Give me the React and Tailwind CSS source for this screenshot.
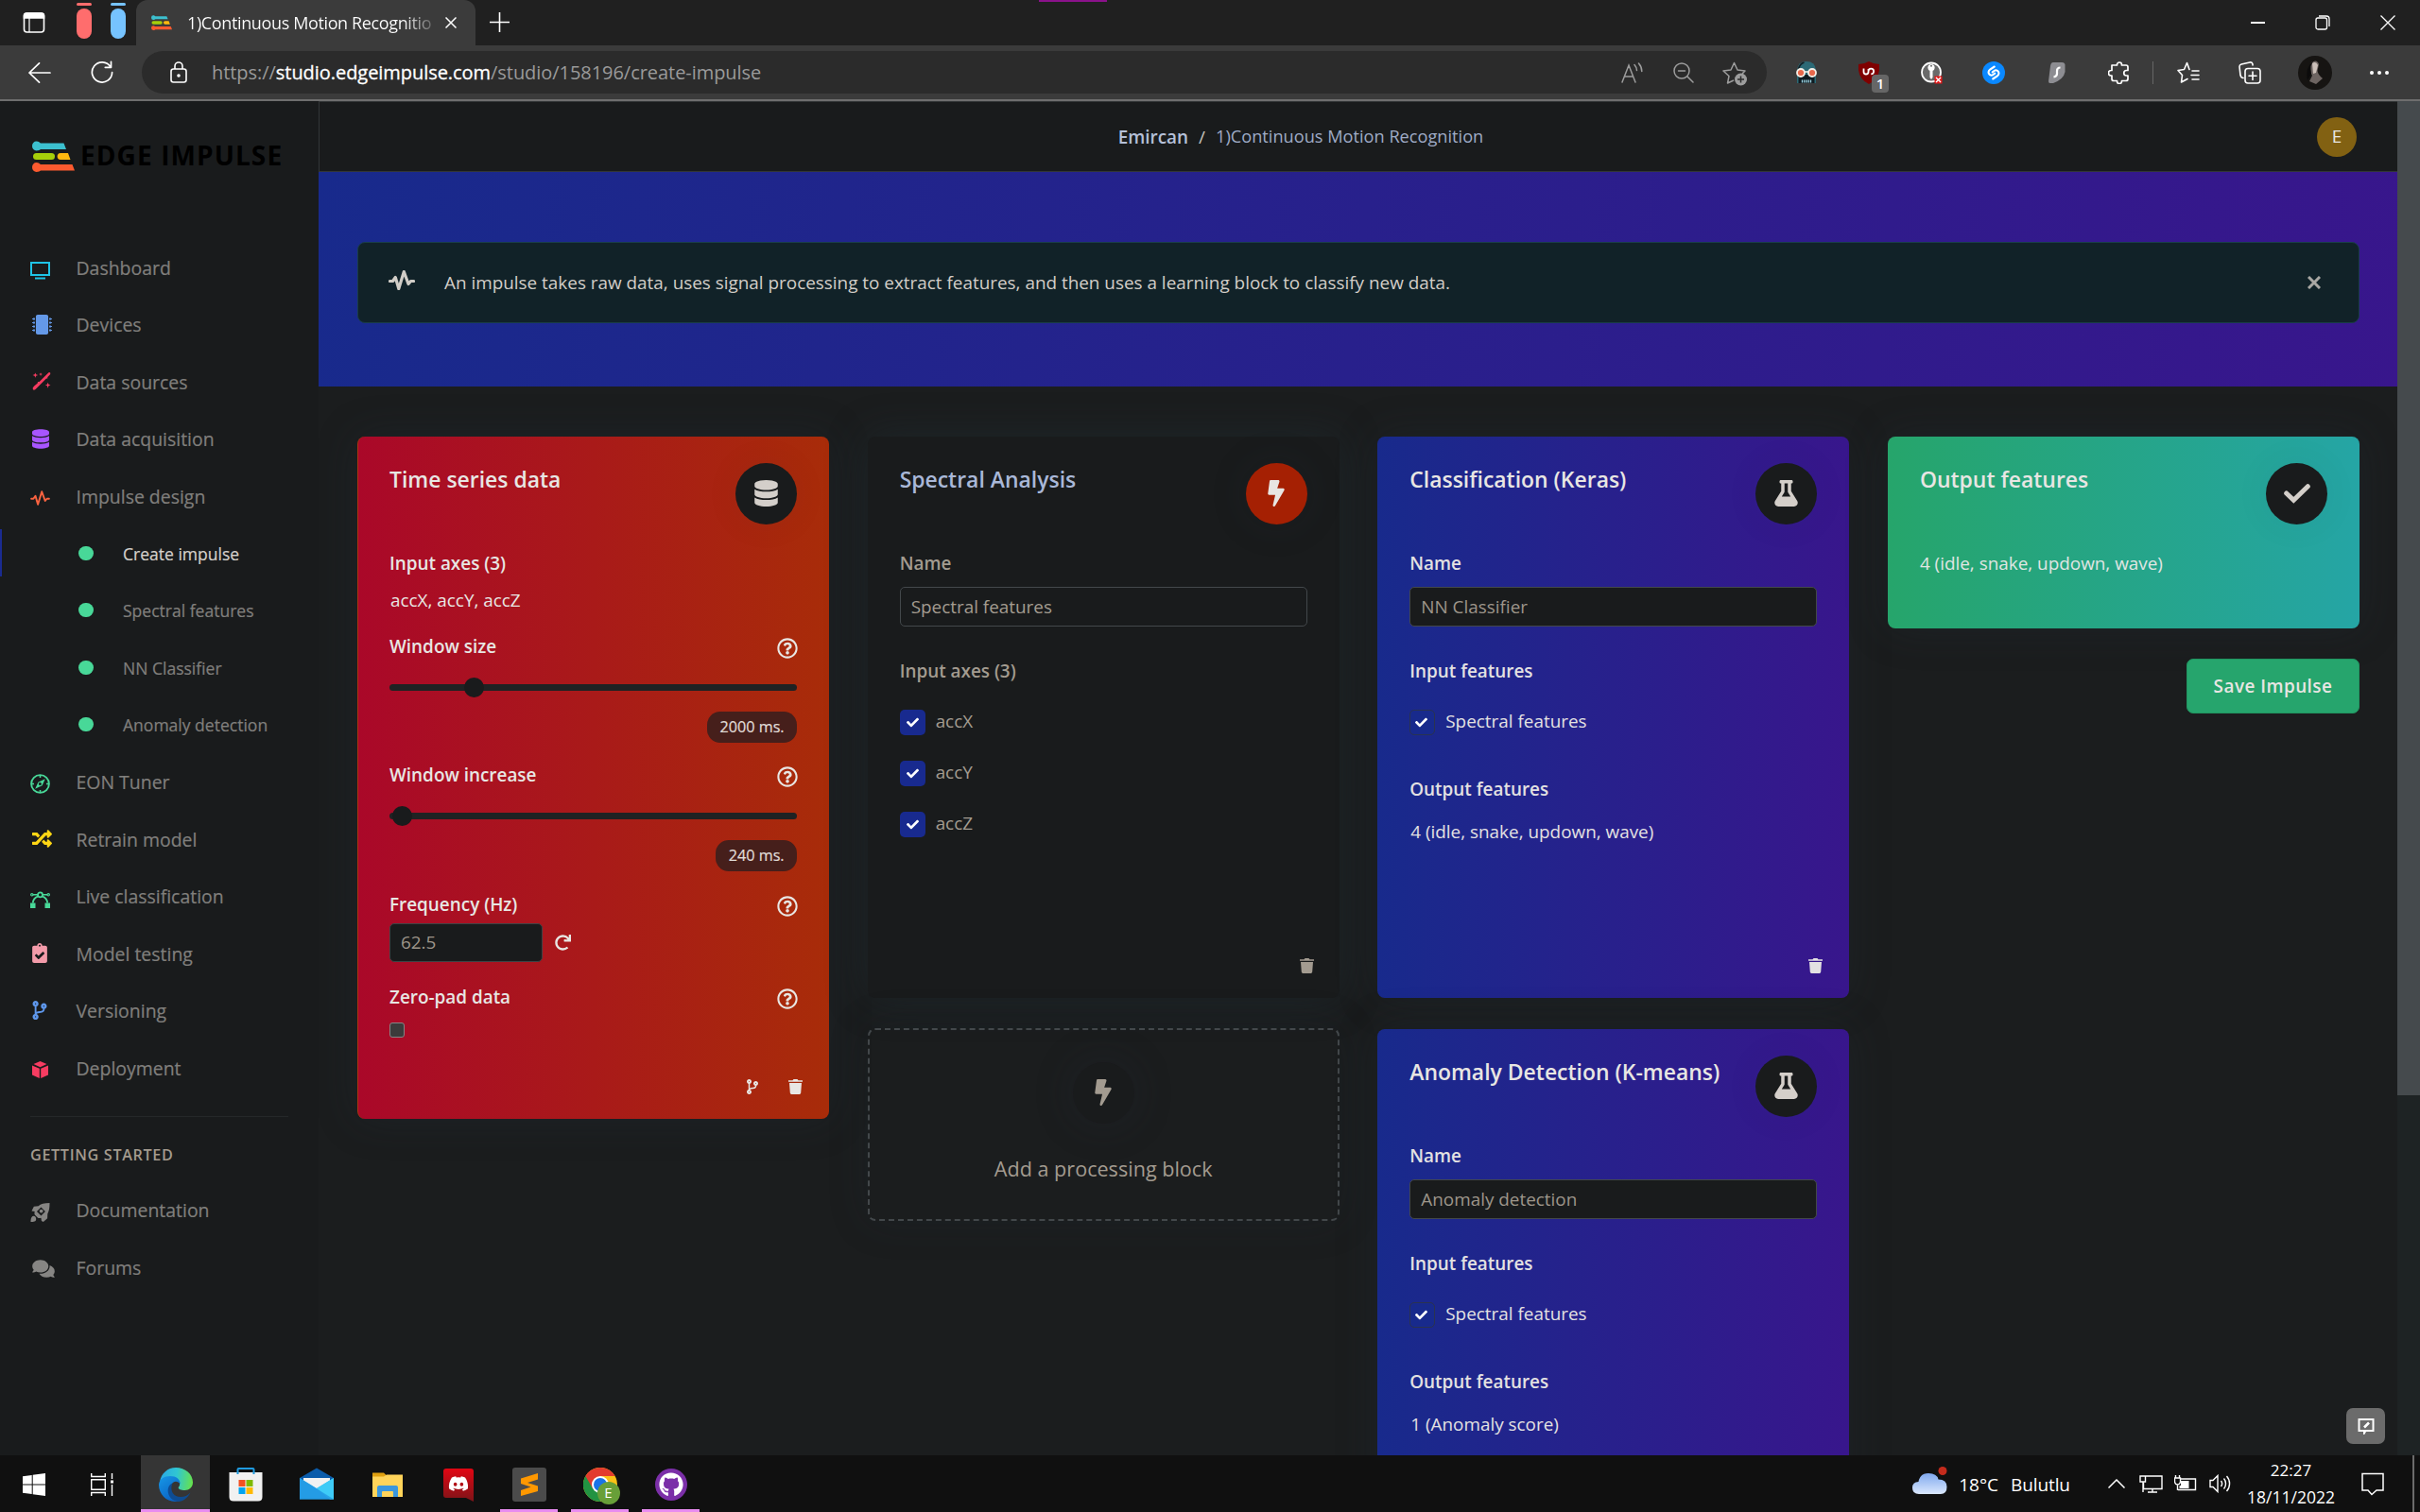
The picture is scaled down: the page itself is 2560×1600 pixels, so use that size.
import React from "react";
import {
  FaDatabase, FaMicrochip, FaRandom, FaClipboardCheck, FaCodeBranch, FaComments,
  FaBolt, FaFlask, FaRegQuestionCircle, FaRedo, FaGithub, FaCheck,
} from "react-icons/fa";
import { FaDiscord } from "react-icons/fa6";

/* ---------- shared icons ---------- */

function EdgeImpulseMark({ className }) {
  return (
    <svg viewBox="0 0 45 33" className={className} preserveAspectRatio="none">
      <path d="M4.5 .5C7 .5 8 2 9 2.5H33.5L36 9H9C8 9.5 7 10.500 4.500 10.500A4.500 5 0 0 1 4.500 .500Z" fill="#3cc0cf" />
      <rect x="1" y="13" width="23" height="7" rx="3.500" fill="#a6cf0a" />
      <path d="M30 13H38L40.500 20H30C25.500 20 25.500 13 30 13Z" fill="#ffb90f" />
      <path d="M4.500 23C7 23 8 24.500 9 25H42.500L45 31.500H9C8 32 7 33 4.500 33A4.500 5 0 0 1 4.500 23Z" fill="#fb5a2f" />
    </svg>
  );
}

function Pulse({ className, width = 2.4 }) {
  return (
    <svg viewBox="0 0 28 21" className={className} fill="none" stroke="currentColor" strokeWidth={width} strokeLinejoin="round" strokeLinecap="round">
      <path d="M1.500 11.500H4.500L7.300 7.500L10.800 19.500L16.300 1.500L21 14.500L23.500 11.500H26.500" />
    </svg>
  );
}

function Monitor({ className }) {
  return (
    <svg viewBox="0 0 21 19" className={className} fill="none" stroke="currentColor">
      <path d="M1 1H20V14H1Z" strokeWidth="2" />
      <path d="M5 17.500H16" strokeWidth="2" />
    </svg>
  );
}

function Wand({ className }) {
  return (
    <svg viewBox="0 0 21 21" className={className} fill="currentColor">
      <path d="M18.300 .700Q20.800 .200 20.200 2.500L17 6L17.300 7L15.500 7.600L4.800 18.500Q2.500 21 .900 19.700Q0 18 2 16L6 12.500L6.300 11L8 11Z" />
      <path d="M3.500 1L4.300 3L6.500 3.700L4.300 4.500L3.500 6.600L2.700 4.500L.500 3.700L2.700 3ZM9.500 .900L10 2.200L11.500 2.700L10 3.200L9.500 4.600L9 3.200L7.500 2.700L9 2.200ZM17.500 11.700L18.300 14L20.500 14.800L18.300 15.500L17.500 18L16.700 15.500L14.500 14.800L16.700 14Z" />
    </svg>
  );
}

function Compass({ className }) {
  return (
    <svg viewBox="0 0 21 21" className={className} fill="none" stroke="currentColor">
      <circle cx="10.500" cy="10.500" r="9.400" strokeWidth="1.900" />
      <path d="M10.500 1.500V4M10.500 17V19.500M1.500 10.500H4M17 10.500H19.500" strokeWidth="1.600" />
      <path d="M15.800 5.200L12.600 12.200L5.200 15.800L8.400 8.700Z" fill="currentColor" stroke="none" />
      <circle cx="10.400" cy="10.600" r="1.500" fill="#191b1c" stroke="none" />
    </svg>
  );
}

function Vector({ className }) {
  return (
    <svg viewBox="0 0 21 18" className={className} fill="none" stroke="currentColor">
      <path d="M3 3.800H8M13 3.800H18" strokeWidth="1.400" />
      <circle cx="10.500" cy="3.800" r="2.500" strokeWidth="1.800" />
      <circle cx="1.800" cy="3.800" r="1.200" strokeWidth="1.200" />
      <circle cx="19.200" cy="3.800" r="1.200" strokeWidth="1.200" />
      <path d="M8.500 5.300C5 6.500 3 9 2.800 12.500M12.500 5.300C16 6.500 18 9 18.200 12.500" strokeWidth="1.800" />
      <path d="M0 12.500H5.500V18H0ZM15.500 12.500H21V18H15.500Z" fill="currentColor" stroke="none" />
    </svg>
  );
}

function Box({ className }) {
  return (
    <svg viewBox="0 0 17 18" className={className} fill="currentColor">
      <path d="M8.500 0L15.500 3L8.500 6.200L1.500 3ZM0 4.500L7.800 7.800V18L0 14.500ZM17 4.500L9.200 7.800V18L17 14.500Z" />
    </svg>
  );
}

function Spaceship({ className }) {
  return (
    <svg viewBox="0 0 21 21" className={className} fill="currentColor">
      <path fillRule="evenodd" d="M21 0C15 0 11 1 8.500 3.500L3.500 4L1 9L4.500 9.500C4 11 4 12 4.500 13L8 16.500C9 17 10 17 11.500 16.500L12 20L14 21L18.500 17L18.700 12C20.500 9 21 5 21 0ZM11.500 4.800L16.200 9.500L11.500 14.200L6.800 9.500Z" />
      <circle cx="11.700" cy="9" r="2" />
      <path d="M3 14.500C0.500 15 0 18 0 21C3 21 6 20.500 6 18C6 16 5 14.500 3 14.500Z" />
    </svg>
  );
}

function Trash({ className }) {
  return (
    <svg viewBox="0 0 15 16" className={className} fill="currentColor">
      <path d="M0 1.200H4.500L5.500 0H9.500L10.500 1.200H15V2.700H0ZM1 4H14L13.200 14.600Q13 16 11.800 16H3.200Q2 16 1.800 14.600Z" />
    </svg>
  );
}

function BigCheck({ className }) {
  return (
    <svg viewBox="0 0 28 21" className={className} fill="none" stroke="currentColor" strokeWidth="5" strokeLinecap="round">
      <path d="M2.700 10L10.300 17.200L25.300 2.700" />
    </svg>
  );
}

/* ---------- browser chrome ---------- */

function TabBar() {
  return (
    <div className="flex h-12 shrink-0 bg-[#202020] text-white">
      <svg className="ml-[24px] mt-[12px] h-6 w-6" viewBox="0 0 24 24" fill="none" stroke="white" strokeWidth="1.600">
        <rect x="1.500" y="2" width="21" height="20" rx="3" />
        <path d="M1.500 4.500Q1.500 2 4.500 2H19.500Q22.500 2 22.500 4.500V7H1.500Z" fill="white" />
        <path d="M7 7V22" strokeWidth="1.200" />
      </svg>
      <div className="ml-[33px] flex w-4 flex-col pt-[3px]">
        <div className="h-[3px] rounded-sm bg-[#ff6d6d]" />
        <div className="mt-[3px] h-8 rounded-full bg-[#ff6d6d]" />
      </div>
      <div className="ml-[20px] flex w-4 flex-col pt-[3px]">
        <div className="h-[3px] rounded-sm bg-[#76c3ff]" />
        <div className="mt-[3px] h-8 rounded-full bg-[#76c3ff]" />
      </div>
      <div className="ml-[11px] flex w-[359px] items-center rounded-t-xl bg-[#3b3b3b] pl-[16px]">
        <EdgeImpulseMark className="h-4 w-[22px]" />
        <div className="ml-[16px] w-[259px] overflow-hidden whitespace-nowrap bg-gradient-to-r from-white from-88% to-[#666] bg-clip-text text-[18px] tracking-[-0.37px] text-transparent">
          1)Continuous Motion Recognitio
        </div>
        <svg className="ml-[14px] h-3 w-3" viewBox="0 0 12 12" stroke="white" strokeWidth="1.500"><path d="M.5 .5L11.500 11.500M11.500 .5L.5 11.500" /></svg>
      </div>
      <svg className="ml-[15px] mt-[13px] h-[21px] w-[21px]" viewBox="0 0 21 21" stroke="white" strokeWidth="1.600"><path d="M10.500 0V21M0 10.500H21" /></svg>
      <div className="flex h-12 grow items-center justify-end pr-[26px]">
        <div className="h-[1.500px] w-[15px] bg-white" />
        <svg className="ml-[53px] h-4 w-4" viewBox="0 0 16 16" fill="none" stroke="white" strokeWidth="1.300"><rect x="1" y="3" width="11.500" height="12" rx="2" /><path d="M4 1H12Q15 1 15 4V12" /></svg>
        <svg className="ml-[53px] h-4 w-4" viewBox="0 0 16 16" stroke="white" strokeWidth="1.300"><path d="M.5 .5L15.500 15.500M15.500 .5L.5 15.500" /></svg>
      </div>
      <div className="absolute left-[1099px] top-0 h-[2px] w-[72px] bg-[#8b128b]" />
    </div>
  );
}

function Toolbar() {
  return (
    <div className="flex h-[57px] shrink-0 items-center bg-[#3b3b3b] text-white">
      <svg className="ml-[30px] h-6 w-6" viewBox="0 0 24 24" fill="none" stroke="white" strokeWidth="1.700" strokeLinecap="round" strokeLinejoin="round"><path d="M23 12H1M11.500 1.800L1 12L11.500 22.200" /></svg>
      <svg className="ml-[42px] h-[25px] w-[24px]" viewBox="0 0 24 25" fill="none" stroke="white" strokeWidth="1.700" strokeLinecap="round" strokeLinejoin="round"><path d="M21 6.800A10.600 10.600 0 1 0 22.600 12.500M21.500 1.300V7.300H15.300" /></svg>
      <div className="ml-[30px] flex h-[45px] w-[1719px] items-center rounded-full bg-[#2b2b2b] pl-[30px]">
        <svg className="h-[23px] w-[18px]" viewBox="0 0 18 23" fill="none" stroke="white" strokeWidth="1.600"><rect x="1" y="8" width="16" height="14" rx="2.500" /><path d="M5 8V5A4 4 0 0 1 13 5V8" /><circle cx="9" cy="15" r="1" fill="white" /></svg>
        <div className="ml-[26px] grow whitespace-nowrap text-[20px] tracking-[-0.05px] text-[#9a9a9a]">
          https://<span className="text-white [-webkit-text-stroke:0.3px_white]">studio.edgeimpulse.com</span>/studio/158196/create-impulse
        </div>
        <svg className="h-[22px] w-[24px]" viewBox="0 0 24 22" fill="none" stroke="#9d9d9d" strokeWidth="1.500" strokeLinecap="round"><path d="M1 21L8 3L15 21M3.500 15H12.500M14 2.500A10 10 0 0 1 16.500 8.500M18.500 1A13 13 0 0 1 21.800 9.500" /></svg>
        <svg className="ml-[31px] h-[22px] w-[22px]" viewBox="0 0 22 22" fill="none" stroke="#9d9d9d" strokeWidth="1.500" strokeLinecap="round"><circle cx="9" cy="9" r="8" /><path d="M15 15L21 21M5.500 9H12.500" /></svg>
        <svg className="ml-[30px] mr-[21px] mt-[2px] h-[26px] w-[26px]" viewBox="0 0 26 26" fill="none" stroke="#9d9d9d" strokeWidth="1.500" strokeLinejoin="round"><path d="M12 20L5.500 23L7 15.500L1 10L9 9L12.500 1.500L16 9L24 10L21 13" /><circle cx="19.500" cy="19" r="6.500" fill="#9d9d9d" stroke="none" /><path d="M19.500 15.500V22.500M16 19H23" stroke="#2b2b2b" /></svg>
      </div>
      <svg className="ml-[30px] h-[23px] w-[24px]" viewBox="0 0 24 23">
        <path d="M2 9Q3 0 12 0T22 9V23H2Z" fill="#2c6a76" />
        <path d="M3.500 8Q5 2.500 9.500 1" stroke="#142026" strokeWidth="1.800" fill="none" />
        <path d="M3.500 14H20.500V23H3.500Z" fill="#101c22" />
        <circle cx="6" cy="12" r="4" fill="#e8694c" stroke="#f5eee6" strokeWidth="1.800" /><circle cx="18" cy="12" r="4" fill="#e8694c" stroke="#f5eee6" strokeWidth="1.800" />
        <path d="M9.500 11H14.500" stroke="#f5eee6" strokeWidth="1.600" />
        <path d="M7.500 19.500V22.500M9.800 19.500V22.500M12 19.500V22.500M14.200 19.500V22.500M16.500 19.500V22.500" stroke="#9fd6e4" strokeWidth="1.300" />
      </svg>
      <div className="relative ml-[43px] h-[24px] w-[22px]">
        <svg className="h-6 w-[22px]" viewBox="0 0 22 24"><path d="M11 0Q16 3 22 3V9Q21 19 11 24Q1 19 0 9V3Q6 3 11 0Z" fill="#800000" /><path d="M5.500 7.500V11Q5.500 13.500 8 13.500T10.500 11V8M10.500 10.500A2.800 2.800 0 1 1 13.300 13.300" fill="none" stroke="white" strokeWidth="1.800" /></svg>
        <div className="absolute left-[14px] top-[14px] flex h-[19px] w-[18px] items-center justify-center rounded bg-[#666] text-[15px] font-semibold leading-none">1</div>
      </div>
      <svg className="ml-[44px] h-[24px] w-[23px]" viewBox="0 0 23 24"><circle cx="11" cy="11.500" r="10" fill="#6a6a6a" stroke="white" strokeWidth="1.800" /><circle cx="11" cy="6.500" r="3.600" fill="white" /><circle cx="11" cy="4.800" r="1" fill="#6a6a6a" /><path d="M9.500 9H12.500V17L11 19L9.500 17Z" fill="white" /><rect x="14.500" y="15.500" width="8" height="8" fill="#e01b1b" /><path d="M16 17L21 22M21 17L16 22" stroke="white" strokeWidth="1.400" /></svg>
      <svg className="ml-[42px] h-6 w-6" viewBox="0 0 24 24" fill="none"><circle cx="12" cy="12" r="12" fill="#0a88ff" /><path d="M12.800 5.500L8.500 8.300Q4.800 11.300 8 14.200Q9.800 15.300 11.500 14L13.300 12.600M11.200 18.500L15.500 15.700Q19.200 12.700 16 9.800Q14.200 8.700 12.500 10L10.700 11.400" stroke="white" strokeWidth="2.100" strokeLinecap="round" /></svg>
      <svg className="ml-[46px] h-[22px] w-[18px]" viewBox="0 0 18 22" fill="none"><path d="M5 0H14Q18 0 17.500 4V10Q16 18 5 22H1.500Q0 22 0 20L2 4Q2.500 0 5 0Z" fill="#8d8d92" /><path d="M12.500 5.500Q9 5.500 9 9V12Q9 15 5.500 15.500" stroke="white" strokeWidth="2.200" /></svg>
      <svg className="ml-[45px] h-[24px] w-[22px]" viewBox="0 0 22 24" fill="none" stroke="white" strokeWidth="1.700" strokeLinejoin="round"><path d="M4 4H9.500V3.500A2.500 2.500 0 0 1 14.500 3.500V4H19Q21 4 21 6V9.500H19.500A2.600 2.600 0 0 0 19.500 15H21V18.500Q21 20.500 19 20.500H14.500V21A2.500 2.500 0 0 1 9.500 21V20.500H6Q4 20.500 4 18.500V15H3.200A2.600 2.600 0 0 1 3.200 9.500H4Z" /></svg>
      <div className="ml-[25px] h-6 w-px bg-[#666]" />
      <svg className="ml-[25px] h-6 w-6" viewBox="0 0 24 24" fill="none" stroke="white" strokeWidth="1.600" strokeLinejoin="round" strokeLinecap="round"><path d="M13 8.500L10.500 1.500L7.500 8.500L1 9.500L5.500 14.500L4.500 22L11 18.500M16 10H23M15 14.500H23M16 19H23" /></svg>
      <svg className="ml-[41px] h-6 w-6" viewBox="0 0 24 24" fill="none" stroke="white" strokeWidth="1.600" strokeLinecap="round"><path d="M5 17.500L3.500 17Q2.500 16.500 2 14.500L1 5.500Q1 3.500 3 3L12 1Q14.500 .5 15 3V4" /><rect x="7" y="7.500" width="16" height="15.500" rx="3" /><path d="M15 11V19.500M11 15.200H19" /></svg>
      <svg className="ml-[39px] h-9 w-9" viewBox="0 0 36 36"><circle cx="18" cy="18" r="18" fill="#161412" /><path d="M14 7Q20 3 22 9L20.500 16Q21 20 26 24L19 30L12 27L15 21Q11 14 14 7Z" fill="#6d6461" /><path d="M15 8Q19 5 21 10L19 18L16 19Z" fill="#cbbfb8" /><path d="M17 5Q12 9 14 19L10 26Q7 12 17 5Z" fill="#0c0b0b" /></svg>
      <div className="ml-[40px] flex gap-[4px]"><div className="h-[4px] w-[4px] rounded-full bg-white" /><div className="h-[4px] w-[4px] rounded-full bg-white" /><div className="h-[4px] w-[4px] rounded-full bg-white" /></div>
    </div>
  );
}

/* ---------- sidebar ---------- */

function NavItem({ icon, label }) {
  return (
    <div className="flex h-[60.500px] shrink-0 items-center pl-[32px] text-[19.44px] text-[#807f7c] [-webkit-text-stroke:0.2px]">
      <div className="flex w-[48.500px] items-center">{icon}</div>
      <span className="pt-[1.500px]">{label}</span>
    </div>
  );
}

function SubItem({ label, active }) {
  return (
    <div className="flex h-[60.500px] shrink-0 items-center">
      <div className={active ? "h-[50px] w-[2px] bg-[#1a2b90]" : "w-[2px]"} />
      <div className="ml-[81px] h-[15px] w-[15.500px] rounded-full bg-[#48d898]" />
      <div className={active ? "ml-[31.500px] pt-px text-[17.55px] text-[#d4d0cb] [-webkit-text-stroke:0.2px]" : "ml-[31.500px] pt-px text-[17.55px] text-[#807f7c] [-webkit-text-stroke:0.2px]"}>{label}</div>
    </div>
  );
}

function Sidebar() {
  return (
    <div className="flex w-[337px] shrink-0 flex-col overflow-hidden bg-[#191b1c]">
      <div className="flex h-[145.500px] shrink-0 pl-[34px] pt-[42px]">
        <EdgeImpulseMark className="h-[33px] w-[45px]" />
        <div className="ml-[6px] mt-[-4px] whitespace-nowrap text-[28px] font-bold leading-[38px] tracking-[1.1px] text-black">EDGE IMPULSE</div>
      </div>
      <NavItem label="Dashboard" icon={<Monitor className="mt-[7px] h-[19px] w-[21px] text-[#1fc3e6]" />} />
      <NavItem label="Devices" icon={<FaMicrochip className="ml-[2px] h-[21px] w-[21px] text-[#6499e8]" />} />
      <NavItem label="Data sources" icon={<Wand className="ml-[2px] h-[21px] w-[20px] text-[#f73c61]" />} />
      <NavItem label="Data acquisition" icon={<FaDatabase className="ml-[2px] h-[21px] w-[18px] text-[#a855ff]" />} />
      <NavItem label="Impulse design" icon={<Pulse className="mt-[5px] h-[16px] w-[21px] text-[#fb6340]" width={2.6} />} />
      <SubItem label="Create impulse" active />
      <SubItem label="Spectral features" />
      <SubItem label="NN Classifier" />
      <SubItem label="Anomaly detection" />
      <NavItem label="EON Tuner" icon={<Compass className="mt-[4px] h-[21px] w-[21px] text-[#48d898]" />} />
      <NavItem label="Retrain model" icon={<FaRandom className="ml-[2px] h-[21px] w-[21px] text-[#ffd614]" />} />
      <NavItem label="Live classification" icon={<Vector className="mt-[7px] h-[18px] w-[21px] text-[#48d898]" />} />
      <NavItem label="Model testing" icon={<FaClipboardCheck className="ml-[2px] h-[21px] w-[16px] text-[#f39ba9]" />} />
      <NavItem label="Versioning" icon={<FaCodeBranch className="ml-[2px] h-[20px] w-[16px] text-[#5e97ec]" />} />
      <NavItem label="Deployment" icon={<Box className="ml-[2px] mt-[5px] h-[18px] w-[17px] text-[#f73c61]" />} />
      <div className="ml-[32px] mt-[21px] h-px w-[273px] shrink-0 bg-[#252829]" />
      <div className="flex h-[68px] shrink-0 items-center pl-[32px] pt-[12px] text-[16.2px] font-semibold tracking-[0.65px] text-[#a39a8e]">GETTING STARTED</div>
      <NavItem label="Documentation" icon={<Spaceship className="mt-[5px] h-[20px] w-[21px] text-[#868583]" />} />
      <NavItem label="Forums" icon={<FaComments className="ml-[2px] mt-[3px] h-[21px] w-[24px] text-[#868583]" />} />
    </div>
  );
}

/* ---------- blocks ---------- */

function CardHeader({ title, titleClass, circleClass, icon }) {
  return (
    <div className="flex h-[65px] shrink-0 justify-between">
      <div className={titleClass}>{title}</div>
      <div className={circleClass}>{icon}</div>
    </div>
  );
}

const TITLE = "h-[34px] whitespace-nowrap text-[22.95px] font-semibold leading-[34px] text-[#e8e6e3]";
const TITLE_MUTED = "h-[34px] whitespace-nowrap text-[22.95px] font-semibold leading-[34px] text-[#a9b8d8]";
const CIRCLE = "flex h-[65px] w-[65px] items-center justify-center rounded-full bg-[#191b1c] text-[#d4cfca] shadow-[0_0_40px_rgba(40,56,64,0.06)]";
const CIRCLE_RED = "flex h-[65px] w-[65px] items-center justify-center rounded-full bg-[#a52003] text-[#e8e6e3] shadow-[0_0_40px_rgba(40,56,64,0.15)]";

function Field({ label, className }) {
  return (
    <div className={className}>
      <span>{label}</span>
      <FaRegQuestionCircle className="mr-[-1px] mt-[4px] h-[22px] w-[22px] text-[#e8e6e3]" />
    </div>
  );
}

function Slider({ left, children }) {
  return (
    <>
      <div className="mt-[19px] flex h-[21px] shrink-0 items-center">
        <div className="flex h-[7px] w-full items-center rounded-full bg-[#1f2223]">
          <div className="h-[21px] w-[21px] rounded-full bg-[#191b1c]" style={{ marginLeft: left }} />
        </div>
      </div>
      <div className="mt-[15px] flex h-[33px] shrink-0 items-center self-end rounded-[14px] bg-[#461f1b] px-[13.500px] text-[16.2px] text-[#e0dcd8] [-webkit-text-stroke:0.2px]">{children}</div>
    </>
  );
}

function TimeSeriesCard() {
  return (
    <div className="flex h-[722px] flex-col rounded-lg border-l border-[#a9360f] bg-linear-[90deg,#aa0829,#a82c09] pl-[33px] pr-[34px] pt-[28px] text-[18.9px] leading-[28px] text-[#e8e6e3] shadow-[0_0_43px_rgba(36,52,60,0.28)]">
      <CardHeader title="Time series data" titleClass={TITLE} circleClass={CIRCLE} icon={<FaDatabase className="h-[28px] w-[25px]" />} />
      <div className="mt-[27px] h-7 font-semibold">Input axes (3)</div>
      <div className="mt-[11px] h-7 pl-px">accX, accY, accZ</div>
      <Field label="Window size" className="mt-[21px] flex h-7 items-center justify-between font-semibold" />
      <Slider left="79px">2000 ms.</Slider>
      <Field label="Window increase" className="mt-[20px] flex h-7 items-center justify-between font-semibold" />
      <Slider left="3px">240 ms.</Slider>
      <Field label="Frequency (Hz)" className="mt-[21px] flex h-7 items-center justify-between font-semibold" />
      <div className="mt-[6px] flex h-[41px] shrink-0 items-center">
        <div className="flex h-[41px] w-[162px] items-center rounded-[5px] border border-[#3d4345] bg-[#191b1c] pl-[11px] text-[#9d958a]">62.5</div>
        <FaRedo className="ml-[13px] h-[17px] w-[17px]" />
      </div>
      <Field label="Zero-pad data" className="mt-[23px] flex h-7 items-center justify-between font-semibold" />
      <div className="mt-[13px] h-4 w-4 rounded-[3px] border border-[#858585] bg-[#3b3b3b]" />
      <div className="mr-[-6px] mt-[44px] flex h-[17px] items-center justify-end gap-[31px]">
        <FaCodeBranch className="h-[16px] w-[14px]" />
        <Trash className="h-4 w-[15px]" />
      </div>
    </div>
  );
}

function SpectralCard() {
  return (
    <div className="flex h-[594px] flex-col rounded-lg bg-[#191b1c] px-[34px] pt-[28px] text-[18.9px] leading-[28px] text-[#a39b90] shadow-[0_0_43px_rgba(36,52,60,0.4)]">
      <CardHeader title="Spectral Analysis" titleClass={TITLE_MUTED} circleClass={CIRCLE_RED} icon={<FaBolt className="h-[28px] w-[20px]" />} />
      <div className="mt-[27px] h-7 font-semibold">Name</div>
      <div className="mt-[11px] flex h-[42px] items-center rounded-[5px] border border-[#43484b] pl-[11px]">Spectral features</div>
      <div className="mt-[33px] h-7 font-semibold">Input axes (3)</div>
      <div className="mt-[27px] flex flex-col gap-[27px]">
        {["accX", "accY", "accZ"].map((a) => (
          <div key={a} className="flex h-[27px] items-center">
            <div className="flex h-[27px] w-[27px] items-center justify-center rounded-[5px] bg-[#182a8f] text-white"><FaCheck className="h-[13px] w-[13px]" /></div>
            <span className="mb-[3px] ml-[11px]">{a}</span>
          </div>
        ))}
      </div>
      <div className="mb-[26px] mr-[-7px] mt-auto flex justify-end"><Trash className="h-4 w-[15px]" /></div>
    </div>
  );
}

function LearningCard({ title, name, output }) {
  return (
    <div className="flex h-[594px] shrink-0 flex-col rounded-lg bg-linear-[90deg,#182a8c,#38168c] px-[34px] pt-[28px] text-[18.9px] leading-[28px] text-[#e3e1e2] shadow-[0_0_43px_rgba(36,52,60,0.28)]">
      <CardHeader title={title} titleClass={TITLE} circleClass={CIRCLE} icon={<FaFlask className="h-[28px] w-[25px]" />} />
      <div className="mt-[27px] h-7 font-semibold">Name</div>
      <div className="mt-[11px] flex h-[42px] items-center rounded-[5px] border border-[#43484b] bg-[#191b1c] pl-[11px] text-[#9d958a]">{name}</div>
      <div className="mt-[33px] h-7 font-semibold">Input features</div>
      <div className="mt-[27px] flex h-[27px] items-center">
        <div className="flex h-[27px] w-[27px] items-center justify-center rounded-[5px] border border-[#2a3350] bg-[#182a8c] text-white"><FaCheck className="mr-[2px] h-[13px] w-[13px]" /></div>
        <span className="mb-[3px] ml-[11px]">Spectral features</span>
      </div>
      <div className="mt-[43px] h-7 font-semibold">Output features</div>
      <div className="mt-[17px] h-7 pl-px">{output}</div>
      <div className="mb-[26px] mr-[-6px] mt-auto flex justify-end"><Trash className="h-4 w-[15px]" /></div>
    </div>
  );
}

function Page() {
  return (
    <div className="flex grow flex-col overflow-hidden border-t border-[#323536] bg-[#1b1d1e]">
      <div className="flex h-[74px] shrink-0 items-center border-b border-l border-[#323638] bg-[#191b1c] text-[18.9px]">
        <div className="flex grow items-center justify-center gap-[11px] pt-px text-[#b5c0d8]">
          <span className="font-semibold">Emircan</span>
          <span className="text-[#c8c4be]">/</span>
          <span className="text-[18.2px] text-[#9fabc6]">1)Continuous Motion Recognition</span>
        </div>
        <div className="ml-[37px] mr-[43px] flex h-[42px] w-[42px] items-center justify-center rounded-full bg-[#826112] text-[18.9px] text-[#e8e6e3]">E</div>
      </div>
      <div className="h-[227px] shrink-0 bg-linear-[97deg,#182a8c,#38168c] pl-[41px] pr-[40px] pt-[74px]">
        <div className="flex h-[86px] items-center rounded-lg border border-[#1a3d48] bg-[#112228] pl-[32px] pr-[40px] text-[18.9px] text-[#d1cdc7]">
          <Pulse className="mb-[5px] h-[21px] w-[28px]" width={3.2} />
          <div className="ml-[31px] grow">An impulse takes raw data, uses signal processing to extract features, and then uses a learning block to classify new data.</div>
          <svg className="h-[14px] w-[14px]" viewBox="0 0 14 14" stroke="#a9a7a3" strokeWidth="3"><path d="M1 1L13 13M13 1L1 13" /></svg>
        </div>
      </div>
      <div className="grid grid-cols-4 items-start gap-x-[40.500px] pl-[41px] pr-[40px] pt-[52.500px]">
        <TimeSeriesCard />
        <div className="flex flex-col gap-8">
          <SpectralCard />
          <div className="flex h-[204px] flex-col items-center rounded-lg border-2 border-dashed border-[#43484b] pt-[34px] shadow-[0_0_43px_rgba(36,52,60,0.18)]">
            <div className="flex h-[65px] w-[65px] items-center justify-center rounded-full bg-[#191b1c] text-[#a39b90] shadow-[0_0_40px_rgba(36,44,56,0.3)]"><FaBolt className="h-[28px] w-[20px]" /></div>
            <div className="mt-[32px] text-[21.6px] leading-[32px] text-[#a39b90]">Add a processing block</div>
          </div>
        </div>
        <div className="flex flex-col gap-[33px]">
          <LearningCard title="Classification (Keras)" name="NN Classifier" output="4 (idle, snake, updown, wave)" />
          <LearningCard title="Anomaly Detection (K-means)" name="Anomaly detection" output="1 (Anomaly score)" />
        </div>
        <div className="flex flex-col">
          <div className="flex h-[203px] flex-col rounded-lg bg-linear-[90deg,#26a56b,#25a5a5] px-[34px] pt-[28px] text-[18.9px] leading-[28px] text-[#e0e6e3] shadow-[0_0_43px_rgba(36,52,60,0.28)]">
            <CardHeader title="Output features" titleClass={TITLE} circleClass={CIRCLE} icon={<BigCheck className="h-[21px] w-[28px]" />} />
            <div className="mt-[27px] h-7">4 (idle, snake, updown, wave)</div>
          </div>
          <button className="mt-[32px] h-[58px] w-[183px] self-end rounded-[7px] border border-[#219661] bg-[#26a56d] pt-px text-[18.9px] font-semibold tracking-[0.47px] text-[#e8e6e3]">Save Impulse</button>
        </div>
      </div>
    </div>
  );
}

/* ---------- taskbar ---------- */

function Slot({ children, className, bar }) {
  return (
    <div className={className}>
      <div className="flex h-[57px] items-center justify-center pt-[4px]">{children}</div>
      <div className={bar} />
    </div>
  );
}

const SLOT = "flex w-[75px] shrink-0 flex-col items-center";
const BAR = "h-[3px] w-[61px] bg-[#e88cf0]";

function Taskbar() {
  return (
    <div className="flex h-[60px] shrink-0 bg-[#101010] text-white">
      <Slot className="flex w-[72px] shrink-0 flex-col items-center">
        <svg className="h-6 w-6" viewBox="0 0 24 24" fill="white"><path d="M0 3.300L9.700 1.900V11.500H0ZM10.700 1.800L24 0V11.500H10.700ZM0 12.500H9.700V22.100L0 20.700ZM10.700 12.500H24V24L10.700 22.200Z" /></svg>
      </Slot>
      <Slot className="flex w-[72px] shrink-0 flex-col items-center">
        <svg className="h-6 w-6" viewBox="0 0 24 24" fill="none" stroke="white" strokeWidth="1.400"><path d="M.7 0V3.500H15.300V0M.7 6.700H15.300V17.300H.7ZM.7 24V20.500H15.300V24M22.500 0V6M22.500 12V24" /><rect x="21" y="7.500" width="3" height="3" fill="white" stroke="none" /></svg>
      </Slot>
      <Slot className="ml-[5px] flex w-[73px] shrink-0 flex-col items-center bg-[#353535]" bar="h-[3px] w-[73px] bg-[#e88cf0]">
        <svg className="h-9 w-9" viewBox="0 0 36 36">
          <defs>
            <linearGradient id="eg" x1="0" y1="0.400" x2="1" y2="0.500"><stop offset="0" stopColor="#2aa8e6" /><stop offset=".5" stopColor="#30c6d2" /><stop offset="1" stopColor="#66e24e" /></linearGradient>
            <linearGradient id="eb" x1="0" y1="0" x2="0.600" y2="1"><stop offset="0" stopColor="#1797e6" /><stop offset="1" stopColor="#0a63c4" /></linearGradient>
          </defs>
          <path d="M1 15C2.500 6 9.500 0 18 0C28 0 36 7 36 15.500C36 21 32 24 27.500 24C23.500 24 20.500 23 20.700 21C23 19 23 13 17 11C10 8.500 3 11 1 15Z" fill="url(#eg)" />
          <path d="M0 18C.5 12 6 9 12 9C19 9 23 13 22.500 17.500C21 15 18 14 15.500 15.500C12 18 11 24 14 29C16 32 19 34.500 23 35C11 39 0 30 0 18Z" fill="url(#eb)" />
          <path d="M14.500 16.500C11 25 16 31 23 31C28 31 31 29 33.500 26.500C30 33 25 36 20 36C12 35 8.500 27 10 21.500C11 18.500 13 17 14.500 16.500Z" fill="#0e4c92" />
        </svg>
      </Slot>
      <Slot className={SLOT}>
        <svg className="h-9 w-9" viewBox="0 0 36 36"><path d="M9.500 8V2Q9.500 1 10.500 1H25.500Q26.500 1 26.500 2V8" fill="none" stroke="#1f9be0" strokeWidth="2" /><path d="M.5 5H35.500V31Q35.500 35.500 31 35.500H5Q.5 35.500 .5 31Z" fill="#f1f1f1" /><path d="M9.500 5V7M26.500 5V7" stroke="#1f9be0" strokeWidth="2" /><path d="M10.500 13H17.500V20H10.500Z" fill="#f25022" /><path d="M18.500 13H25.500V20H18.500Z" fill="#7fba00" /><path d="M10.500 21H17.500V28H10.500Z" fill="#00a4ef" /><path d="M18.500 21H25.500V28H18.500Z" fill="#ffb900" /></svg>
      </Slot>
      <Slot className={SLOT}>
        <svg className="h-9 w-9" viewBox="0 0 36 36"><path d="M0 11L18 .5L36 11V22H0Z" fill="#0b5cab" /><path d="M4 11H32V26H4Z" fill="#f2f2f2" /><path d="M0 11L18 22L36 11V33.500H0Z" fill="#2fb4f0" /><path d="M18 22L36 11V33.500L32 33.500Z" fill="#3ecbf7" /><path d="M0 11L36 33.500H0Z" fill="#1e8fde" opacity=".65" /></svg>
      </Slot>
      <Slot className={SLOT}>
        <svg className="h-9 w-9" viewBox="0 0 36 36"><path d="M2 5.500H14L16.500 8H34V12H2Z" fill="#e0a010" /><path d="M2 9.500H14L17 7.500H34V31H2Z" fill="#ffd45a" /><path d="M7 31V21Q7 19 9 19H27Q29 19 29 21V31H24V26Q24 25 23 25H13Q12 25 12 26V31Z" fill="#3b97de" /></svg>
      </Slot>
      <Slot className={SLOT}>
        <div className="relative h-9 w-9">
          <svg className="h-9 w-9" viewBox="0 0 36 36"><defs><linearGradient id="dg" x1="0" y1="0" x2="0" y2="1"><stop offset="0" stopColor="#e20613" /><stop offset="1" stopColor="#7c1418" /></linearGradient></defs><path d="M5 1H31Q34 1 34 4V36L26 32H5Q2 32 2 29V4Q2 1 5 1Z" fill="url(#dg)" /></svg>
          <FaDiscord className="absolute left-[7px] top-[6px] h-[22px] w-[22px]" />
        </div>
      </Slot>
      <Slot className={SLOT} bar={BAR}>
        <svg className="h-9 w-9" viewBox="0 0 36 36"><rect width="36" height="36" rx="3" fill="#4b4b4b" /><path d="M9 11.500L27 6V12.500L16 16L27 19.500V25L9 30V24L19.500 20.500L9 17Z" fill="#ff9800" /></svg>
      </Slot>
      <Slot className={SLOT} bar={BAR}>
        <div className="relative h-9 w-9">
          <svg className="h-9 w-9" viewBox="0 0 36 36"><circle cx="18" cy="18" r="18" fill="#fbc116" /><path d="M18 18L2.400 9A18 18 0 0 0 18 36L25.800 22.500Z" fill="#229342" /><path d="M2.400 9A18 18 0 0 1 33.600 9H18L10.200 22.500Z" fill="#e33b2e" /><circle cx="18" cy="18" r="9" fill="white" /><circle cx="18" cy="18" r="7" fill="#1a73e8" /></svg>
          <div className="absolute left-[15px] top-[15px] flex h-[24px] w-[24px] items-center justify-center rounded-full bg-[#689f38] text-[15px] text-white">E</div>
        </div>
      </Slot>
      <Slot className={SLOT} bar={BAR}>
        <div className="flex h-[34px] w-[34px] items-center justify-center rounded-full bg-[#7b2fa8]"><FaGithub className="h-[26px] w-[26px]" /></div>
      </Slot>

      <div className="flex grow items-center justify-end text-[19px]">
        <svg className="mt-[-6px] h-[30px] w-[37px]" viewBox="0 0 37 30"><defs><linearGradient id="cl" x1="0" y1="0" x2="0" y2="1"><stop offset="0" stopColor="#7fa8ee" /><stop offset="1" stopColor="#dbe8fd" /></linearGradient></defs><path d="M7 29Q0 29 0 22.500T6.500 16Q8 7 17 7T27.500 13.500Q36.500 13.500 36.500 21.500T29 29Z" fill="url(#cl)" /><circle cx="32" cy="4.500" r="4.500" fill="#c42b1c" /></svg>
        <span className="ml-[12px] mt-[2px] whitespace-nowrap">18°C</span>
        <span className="ml-[13px] mt-[2px] w-[64px] whitespace-nowrap tracking-[-0.1px]">Bulutlu</span>
        <svg className="ml-[39px] h-[10px] w-[18px]" viewBox="0 0 18 10" fill="none" stroke="white" strokeWidth="1.500"><path d="M.5 9.500L9 1L17.500 9.500" /></svg>
        <svg className="ml-[15px] h-[20px] w-[25px]" viewBox="0 0 25 20" fill="none" stroke="white" strokeWidth="1.400"><path d="M7 2H24V15.500H4.500V9M14 15.500V19M9 19H19M4 8V19M1 2H6.500V8H1Z" /></svg>
        <svg className="ml-[12px] h-[20px] w-[24px]" viewBox="0 0 24 20" fill="none" stroke="white" strokeWidth="1.400"><path d="M7 5H22.500V16.500H4M1.500 1V4M5.500 1V4M.5 4H6.500V8Q6 11 3.500 11T.5 8ZM3.500 11V17" /><path d="M7 7H15.500V15H5.500V12H7Z" fill="white" stroke="none" /></svg>
        <svg className="ml-[13px] h-[20px] w-[23px]" viewBox="0 0 23 20" fill="none" stroke="white" strokeWidth="1.400"><path d="M1 6.500H4L9 1.500V18.500L4 13.500H1ZM12.500 7A5 5 0 0 1 12.500 13M15.500 4.500A8.500 8.500 0 0 1 15.500 15.500M18.500 2A12 12 0 0 1 18.500 18" /></svg>
        <div className="ml-[17px] flex w-[93px] flex-col items-center text-[17.5px] leading-[28px]">
          <div className="text-[17px]">22:27</div>
          <div>18/11/2022</div>
        </div>
        <svg className="ml-[28px] mr-[30px] h-[25px] w-[24px]" viewBox="0 0 24 25" fill="none" stroke="white" strokeWidth="1.500"><path d="M1 1.500H23V19H16L11 23.500L7 19H1Z" /></svg>
        <div className="mr-[6px] h-[60px] w-[2px] bg-[#6b6b6b]" />
      </div>
    </div>
  );
}

export default function App() {
  return (
    <div className="relative flex h-[1600px] w-[2560px] flex-col overflow-hidden bg-[#1b1d1e] font-['Open_Sans',sans-serif]">
      <TabBar />
      <Toolbar />
      <div className="h-[2px] shrink-0 bg-[#6e6e6e]" />
      <div className="flex h-[1433px] shrink-0">
        <Sidebar />
        <Page />
        <div className="w-[24px] shrink-0 bg-[#1e2324]"><div className="h-[1052px] bg-[#454a4d]" /></div>
      </div>
      <div className="absolute left-[2482px] top-[1490px] flex h-[38px] w-[41px] items-center justify-center rounded-[7px] bg-[#6b6b6b]">
        <svg className="h-[18px] w-[18px]" viewBox="0 0 18 18" fill="none" stroke="white" strokeWidth="2"><path d="M1.500 2H16.500V14H8.500L7 16.500V14H1.500Z" /><path d="M7 10.500L12 5.500" strokeWidth="2.600" /></svg>
      </div>
      <Taskbar />
    </div>
  );
}
